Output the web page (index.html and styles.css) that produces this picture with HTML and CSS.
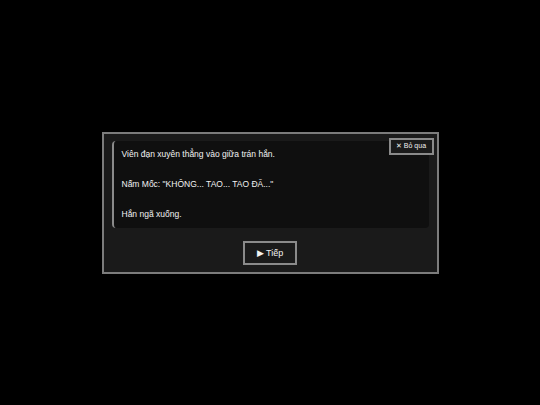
FILE: index.html
```html
<!DOCTYPE html>
<html lang="vi">
<head>
  <meta charset="UTF-8" />
  <title>Hội thoại</title>
  <meta name="viewport" content="width=device-width, initial-scale=1.0" />
  <link rel="stylesheet" href="styles.css">
</head>
<body>

<div class="stage">
  <div class="dialog">
    <button class="skip">✕ Bỏ qua</button>

    <div class="story">
      <p>Viên đạn xuyên thẳng vào giữa trán hắn.</p>
      <p>Nấm Mốc: "KHÔNG... TAO... TAO ĐÃ..."</p>
      <p>Hắn ngã xuống.</p>
    </div>

    <div class="actions">
      <button class="next">▶ Tiếp</button>
    </div>
  </div>
</div>

</body>
</html>
```

FILE: styles.css
```css
html, body {
  margin: 0;
  padding: 0;
  height: 100%;
  background: #000;
  color: #f2f2f2;
  font-family: 'Liberation Sans', sans-serif;
}

.stage {
  height: 100%;
  display: flex;
  align-items: center;
  justify-content: center;
}

.dialog {
  position: relative;
  width: 337px;
  box-sizing: border-box;
  padding: 7px 8px 7px;
  background: #1a1a1a;
  border: 2px solid #7c7c7c;
}

/* khung chữ của lời kể */
.story {
  height: 87px;
  box-sizing: border-box;
  padding: 6px 8px;
  background: #0f0f0f;
  border-left: 2px solid #8a8a8a;
  border-radius: 4px;
}

.story p {
  margin: 0 0 15px;
  font-size: 8.5px;
  line-height: 15px;
}

.story p:last-child {
  margin-bottom: 0;
}

.actions {
  display: flex;
  justify-content: center;
  margin-top: 13px;
}

button {
  font-family: inherit;
  font-weight: normal;
  color: #f2f2f2;
  background: #1a1a1a;
  cursor: pointer;
}

.next {
  width: 54px;
  height: 24px;
  padding: 0;
  font-size: 9px;
  border: 2px solid #8a8a8a;
}

.skip {
  position: absolute;
  top: 4px;
  right: 3px;
  width: 45px;
  height: 17px;
  padding: 0;
  font-size: 7px;
  border: 2px solid #8a8a8a;
}
```
